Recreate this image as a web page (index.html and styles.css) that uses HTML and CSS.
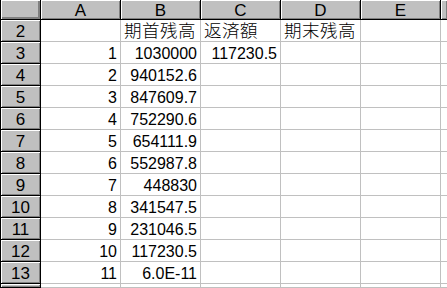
FILE: index.html
```html
<!DOCTYPE html>
<html lang="ja">
<head>
<meta charset="utf-8">
<title>Sheet</title>
<link rel="stylesheet" href="styles.css">
</head>
<body>
<div class="sheet">
  <div class="hd corner"></div>
  <div class="hd col">A</div>
  <div class="hd col">B</div>
  <div class="hd col">C</div>
  <div class="hd col">D</div>
  <div class="hd col">E</div>
  <div class="hd col edge"></div>

  <div class="hd row">2</div>
  <div class="c"></div>
  <div class="c jp">期首残高</div>
  <div class="c jp">返済額</div>
  <div class="c jp">期末残高</div>
  <div class="c"></div>
  <div class="c edge"></div>

  <div class="hd row">3</div>
  <div class="c num">1</div>
  <div class="c num">1030000</div>
  <div class="c num">117230.5</div>
  <div class="c"></div>
  <div class="c"></div>
  <div class="c edge"></div>

  <div class="hd row">4</div>
  <div class="c num">2</div>
  <div class="c num">940152.6</div>
  <div class="c"></div><div class="c"></div><div class="c"></div><div class="c edge"></div>

  <div class="hd row">5</div>
  <div class="c num">3</div>
  <div class="c num">847609.7</div>
  <div class="c"></div><div class="c"></div><div class="c"></div><div class="c edge"></div>

  <div class="hd row">6</div>
  <div class="c num">4</div>
  <div class="c num">752290.6</div>
  <div class="c"></div><div class="c"></div><div class="c"></div><div class="c edge"></div>

  <div class="hd row">7</div>
  <div class="c num">5</div>
  <div class="c num">654111.9</div>
  <div class="c"></div><div class="c"></div><div class="c"></div><div class="c edge"></div>

  <div class="hd row">8</div>
  <div class="c num">6</div>
  <div class="c num">552987.8</div>
  <div class="c"></div><div class="c"></div><div class="c"></div><div class="c edge"></div>

  <div class="hd row">9</div>
  <div class="c num">7</div>
  <div class="c num">448830</div>
  <div class="c"></div><div class="c"></div><div class="c"></div><div class="c edge"></div>

  <div class="hd row">10</div>
  <div class="c num">8</div>
  <div class="c num">341547.5</div>
  <div class="c"></div><div class="c"></div><div class="c"></div><div class="c edge"></div>

  <div class="hd row">11</div>
  <div class="c num">9</div>
  <div class="c num">231046.5</div>
  <div class="c"></div><div class="c"></div><div class="c"></div><div class="c edge"></div>

  <div class="hd row">12</div>
  <div class="c num">10</div>
  <div class="c num">117230.5</div>
  <div class="c"></div><div class="c"></div><div class="c"></div><div class="c edge"></div>

  <div class="hd row">13</div>
  <div class="c num">11</div>
  <div class="c num">6.0E-11</div>
  <div class="c"></div><div class="c"></div><div class="c"></div><div class="c edge"></div>

  <div class="hd row"></div>
  <div class="c"></div><div class="c"></div><div class="c"></div><div class="c"></div><div class="c"></div><div class="c edge"></div>
</div>
</body>
</html>
```
FILE: styles.css
```css
html, body {
  margin: 0;
  padding: 0;
  background: #ffffff;
}

.sheet {
  width: 447px;
  height: 288px;
  overflow: hidden;
  display: grid;
  grid-template-columns: 41px repeat(5, 80px) 6px;
  grid-template-rows: 20px repeat(12, 22px) 4px;
  font-family: "Liberation Sans", "Noto Sans CJK JP", sans-serif;
  font-size: 16px;
  line-height: 1;
  color: #000;
}

.sheet > div {
  box-sizing: border-box;
  display: flex;
  align-items: center;
  white-space: nowrap;
  min-width: 0;
}

.hd {
  background: #c0c0c0;
  justify-content: center;
  font-size: 17px;
  border-right: 1px solid #000;
  border-bottom: 1px solid #000;
  box-shadow: inset 1px 1px #ffffff, inset -1px -1px #808080;
}

.corner {
  border-left: 1px solid #000;
  box-shadow: inset 1px 1px #ffffff, inset -2px -2px #808080;
}

.row {
  border-left: 1px solid #000;
  padding-top: 1px;
}

.col {
  padding-top: 1px;
}

.col.edge {
  border-right: none;
}

.c {
  background: #ffffff;
  border-right: 1px solid #c0c0c0;
  border-bottom: 1px solid #c0c0c0;
  padding-top: 2px;
}

.c.edge {
  border-right: none;
}

.num {
  justify-content: flex-end;
  padding-right: 3px;
}

.jp {
  justify-content: flex-start;
  padding-left: 3px;
  font-size: 17.5px;
  font-weight: 300;
  overflow: visible;
  letter-spacing: 0.5px;
}
```
